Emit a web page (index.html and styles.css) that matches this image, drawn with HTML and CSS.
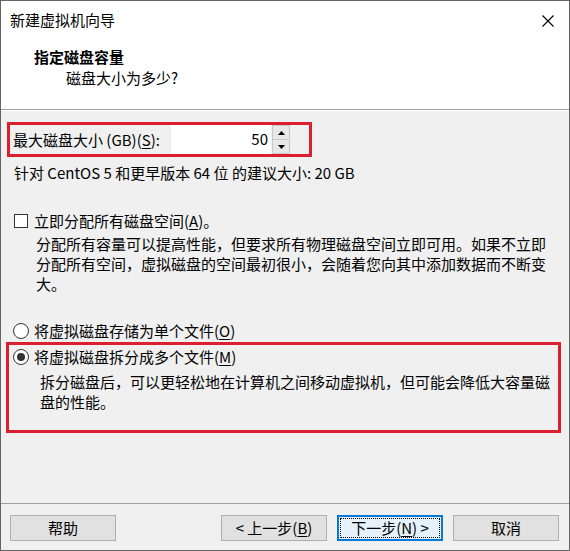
FILE: index.html
```html
<!DOCTYPE html>
<html lang="zh-CN">
<head>
<meta charset="utf-8">
<title>新建虚拟机向导</title>
<link rel="stylesheet" href="styles.css">
</head>
<body>
<div class="window">
  <div class="titlebar">
    <span class="title">新建虚拟机向导</span>
    <span class="close">
      <svg width="12" height="12" viewBox="0 0 12 12"><path d="M0.5 0.5 L11.5 11.5 M11.5 0.5 L0.5 11.5" stroke="#000" stroke-width="1.1" fill="none"/></svg>
    </span>
  </div>
  <div class="header">
    <div class="h-title">指定磁盘容量</div>
    <div class="h-sub">磁盘大小为多少?</div>
  </div>
  <div class="content">
    <div class="highlight size-row">
      <span class="size-label">最大磁盘大小 (GB)(<u>S</u>):</span>
      <div class="spin">
        <div class="spin-input">50</div>
        <div class="spin-buttons">
          <span class="spin-btn"><svg width="7" height="4" viewBox="0 0 7 4"><path d="M3.5 0 L7 4 L0 4 Z" fill="#000"/></svg></span>
          <span class="spin-btn"><svg width="7" height="4" viewBox="0 0 7 4"><path d="M0 0 L7 0 L3.5 4 Z" fill="#000"/></svg></span>
        </div>
      </div>
    </div>
    <div class="hint">针对 CentOS 5 和更早版本 64 位 的建议大小: 20 GB</div>
    <div class="option check-row"><span class="checkbox"></span><span>立即分配所有磁盘空间(<u>A</u>)。</span></div>
    <p class="desc">分配所有容量可以提高性能，但要求所有物理磁盘空间立即可用。如果不立即分配所有空间，虚拟磁盘的空间最初很小，会随着您向其中添加数据而不断变大。</p>
    <div class="option radio-row"><span class="radio"></span><span>将虚拟磁盘存储为单个文件(<u>O</u>)</span></div>
    <div class="highlight split-box">
      <div class="option split-row"><span class="radio checked"></span><span>将虚拟磁盘拆分成多个文件(<u>M</u>)</span></div>
      <p class="desc desc-split">拆分磁盘后，可以更轻松地在计算机之间移动虚拟机，但可能会降低大容量磁盘的性能。</p>
    </div>
  </div>
  <div class="footer">
    <button class="btn">帮助</button>
    <div class="nav">
      <button class="btn">&lt; 上一步(<u>B</u>)</button>
      <button class="btn btn-default">下一步(<u>N</u>) &gt;</button>
      <button class="btn">取消</button>
    </div>
  </div>
</div>
</body>
</html>
```

FILE: styles.css
```css
* { box-sizing: border-box; }

html, body {
  margin: 0;
  padding: 0;
  background: #f0f0f0;
}

body {
  font-family: "Noto Sans CJK SC", "Noto Sans", sans-serif;
  font-size: 15px;
  line-height: 20px;
  color: #000;
}

u { text-decoration: underline; text-underline-offset: 2px; }

.window {
  width: 570px;
  height: 551px;
  border: 1px solid #646464;
  background: #f0f0f0;
  display: flex;
  flex-direction: column;
}

.titlebar {
  height: 37px;
  background: #fff;
  display: flex;
  align-items: center;
  justify-content: space-between;
  padding: 0 15px 0 9px;
}

.title { line-height: 20px; padding-top: 1px; }

.close { display: flex; padding-top: 2px; }

.header {
  height: 72px;
  background: #fff;
  border-bottom: 1px solid #a0a0a0;
  padding: 9px 0 0 33px;
}

.h-title { font-weight: 700; line-height: 20px; }

.h-sub { padding-left: 32px; margin-top: 1px; line-height: 20px; }

.content {
  flex: 1;
  border-top: 1px solid #fff;
}

.highlight {
  border: 3px solid #dc1f2e;
}

.size-row {
  margin: 11px 0 0 6px;
  width: 305px;
  height: 35px;
  display: flex;
  align-items: center;
  padding-left: 3px;
}

.spin {
  margin-left: auto;
  margin-right: 19px;
  display: flex;
  height: 29px;
}

.spin-input {
  width: 100px;
  background: #fff;
  text-align: right;
  padding-right: 3px;
  line-height: 27px;
}

.spin-buttons {
  width: 18px;
  margin-left: 1px;
  display: flex;
  flex-direction: column;
  background: #fff;
}

.spin-btn {
  flex: 1;
  display: flex;
  align-items: center;
  justify-content: center;
  background: #e8e8e8;
  border: 1px solid #c8c8c8;
}

.spin-btn + .spin-btn { border-top: none; }

.hint {
  margin-top: 6px;
  padding-left: 13px;
}

.option {
  display: flex;
  align-items: center;
  height: 20px;
}

.check-row {
  margin-top: 28px;
  padding-left: 13px;
  gap: 6px;
}

.checkbox {
  width: 14px;
  height: 14px;
  background: #fff;
  border: 1px solid #333;
}

.desc {
  margin: 3px 0 0 35px;
  width: 515px;
}

.radio-row {
  margin-top: 27px;
  padding-left: 12px;
  gap: 5px;
}

.radio {
  width: 16px;
  height: 16px;
  border-radius: 50%;
  background: #fff;
  border: 1px solid #333;
  display: flex;
  align-items: center;
  justify-content: center;
}

.radio.checked::after {
  content: "";
  width: 8px;
  height: 8px;
  border-radius: 50%;
  background: #333;
}

.split-box {
  margin: 1px 0 0 5px;
  width: 555px;
  padding: 2px 0 18px 4px;
}

.split-row { gap: 5px; }

.desc-split { margin: 5px 0 0 27px; }

.footer {
  height: 47px;
  border-top: 1px solid #a0a0a0;
  display: flex;
  align-items: flex-start;
  padding: 11px 10px 0 9px;
}

.nav {
  margin-left: auto;
  display: flex;
  gap: 10px;
}

.btn {
  width: 106px;
  height: 26px;
  background: #e1e1e1;
  border: 1px solid #adadad;
  font-family: inherit;
  font-size: 15px;
  line-height: 22px;
  color: #000;
  padding: 0;
  margin: 0;
}

.btn-default {
  border: 2px solid #0078d7;
  background: #e5f1fb;
  outline: 1px dotted #000;
  outline-offset: -4px;
}
```
